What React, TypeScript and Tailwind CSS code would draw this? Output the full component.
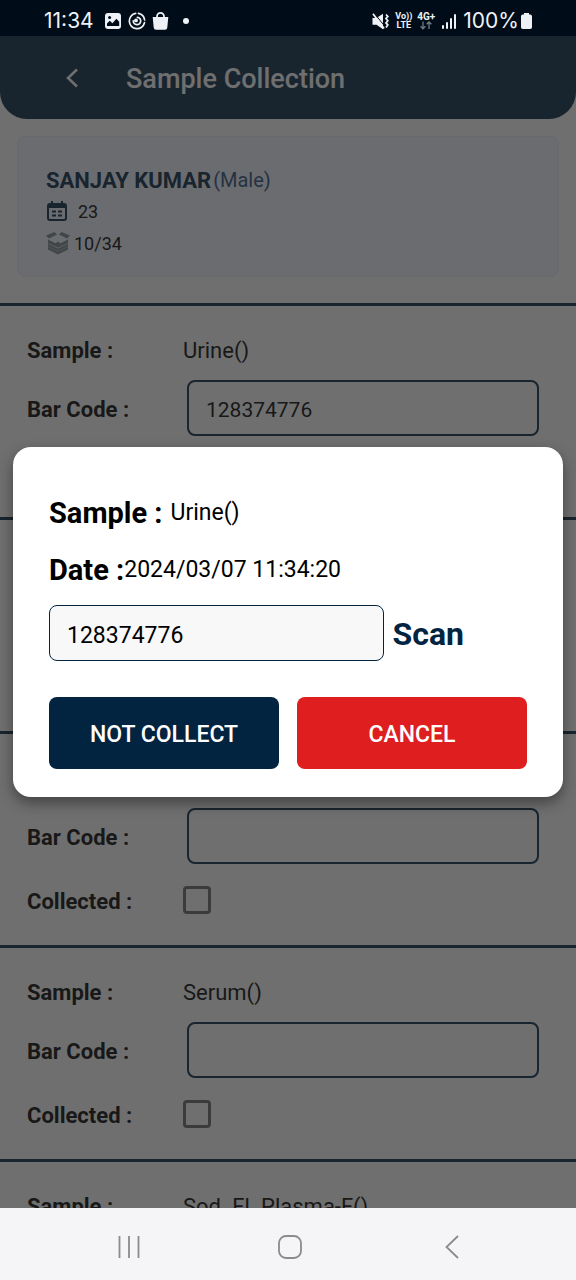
import { clsx } from "clsx";

interface Sample {
  id: number;
  name: string;
  barcode: string;
}

const samples: Sample[] = [
  { id: 1, name: "Urine()", barcode: "128374776" },
  { id: 2, name: "", barcode: "" },
  { id: 3, name: "", barcode: "" },
  { id: 4, name: "Serum()", barcode: "" },
  { id: 5, name: "Sod. Fl. Plasma-F()", barcode: "" },
];

function StatusBar() {
  return (
    <div className="flex h-9 shrink-0 items-center justify-between bg-[#000c17] pt-1.5 pr-11 pl-11 text-[#eef2f6]">
      <div className="flex items-center">
        <span className="font-['Inter',sans-serif] text-[21px] leading-6">11:34</span>
        {/* gallery */}
        <svg className="ml-2.5 h-[18px] w-[18px]" viewBox="0 0 18 18">
          <rect x="1" y="1" width="16" height="16" rx="3" fill="currentColor" />
          <circle cx="5.6" cy="5.6" r="1.5" fill="#000c17" />
          <path d="M3 14v-2.6l2.8-2.6 2.6 2.4 4-4.4 2.8 3V14z" fill="#000c17" />
        </svg>
        {/* disc */}
        <svg className="ml-1.5 h-[18px] w-[18px]" viewBox="0 0 18 18" fill="none" stroke="currentColor" strokeWidth="1.7" strokeLinecap="round">
          <path d="M10.5 1.4A7.7 7.7 0 0 1 16.6 8M16.5 10.7A7.7 7.7 0 1 1 7.6 1.4" />
          <path d="M9.400 5.300A3.700 3.700 0 1 1 5.300 8.800" />
          <circle cx="8" cy="8.400" r="1.1" fill="currentColor" />
        </svg>
        {/* shopping bag */}
        <svg className="ml-1.5 h-[18px] w-[17px]" viewBox="0 0 17 18">
          <path d="M5 6V4.4a3.5 3.5 0 0 1 7 0V6" fill="none" stroke="currentColor" strokeWidth="1.8" />
          <path d="M.7 5h15.6l-1 10.6a2.4 2.4 0 0 1-2.4 2.2H4.1a2.4 2.4 0 0 1-2.4-2.2z" fill="currentColor" />
        </svg>
        <span className="ml-3.5 h-1.5 w-1.5 rounded-full bg-current" />
      </div>
      <div className="flex items-center">
        {/* muted, vibrating */}
        <svg className="h-[17px] w-[17px]" viewBox="0 0 17 17">
          <path d="M.5 5h4L11 .8v15.400L4.500 11.800h-4z" fill="currentColor" />
          <path d="M2.200 .2L13 13.500" stroke="#000c17" strokeWidth="1" />
          <path d="M1 .8L12 15.5" stroke="currentColor" strokeWidth="1.8" />
          <path d="M14 1.5l1.800 2-1.800 2 1.800 2.200-1.800 2.200 1.800 2-1.800 2.600" fill="none" stroke="currentColor" strokeWidth="1.800" />
        </svg>
        <span className="ml-1.5 w-[17px] text-center text-[9px] leading-[9px] font-bold whitespace-nowrap">
          Vo))
          <br />
          LTE
        </span>
        <span className="ml-1 flex w-5 flex-col items-center text-[10px] leading-[9px] font-bold">
          4G+
          <svg className="h-[9px] w-3" viewBox="0 0 12 9" fill="none" stroke="#6f7a84" strokeWidth="1.3">
            <path d="M3 .5v7M.6 5.3L3 7.8l2.4-2.5M9 8V1M6.6 3.3L9 .8l2.4 2.5" />
          </svg>
        </span>
        <svg className="ml-1.5 h-4 w-[15px]" viewBox="0 0 15 16" fill="currentColor">
          <rect x="0" y="12" width="2" height="4" rx="1" />
          <rect x="4" y="9" width="2" height="7" rx="1" />
          <rect x="8" y="5" width="2" height="11" rx="1" />
          <rect x="12" y="1" width="2" height="15" rx="1" />
        </svg>
        <span className="ml-1.5 font-['Inter',sans-serif] text-[21px] leading-6">100%</span>
        <svg className="ml-0.5 h-4 w-[11px]" viewBox="0 0 11 16" fill="currentColor">
          <path d="M3 0h5v1.6h1.2A1.8 1.8 0 0 1 11 3.4v10.8a1.8 1.8 0 0 1-1.8 1.8H1.8A1.8 1.8 0 0 1 0 14.2V3.4a1.8 1.8 0 0 1 1.8-1.8H3z" />
        </svg>
      </div>
    </div>
  );
}

function PatientCard() {
  return (
    <section className="mx-[17px] mt-[17px] mb-[26px] h-[141px] rounded-lg border border-[#ebecf8] bg-[#f4f5ff] px-7 pt-7">
      <h2 className="flex h-[30px] items-center gap-0.5 text-[22px] text-[#022441]">
        <span className="font-bold">SANJAY KUMAR</span>
        <span className="text-[20px] text-[#1f4f7d]">(Male)</span>
      </h2>
      <p className="flex h-8 items-center gap-2.5 text-[18px]">
        <svg className="h-[22px] w-[22px] text-[#022441]" viewBox="0 0 22 22" fill="none" stroke="currentColor">
          <rect x="2" y="4" width="18" height="16" rx="2" strokeWidth="2" />
          <path d="M2 6h18" strokeWidth="4" />
          <path d="M6 1v4M16 1v4" strokeWidth="2" />
          <path d="M6 11.5h4M12 11.5h4M6 15.500h4M12 15.500h4" strokeWidth="1.8" />
        </svg>
        23
      </p>
      <p className="flex h-8 items-center gap-1 text-[18px]">
        <svg className="h-6 w-6 text-[#7a878b]" viewBox="0 0 24 24" fill="currentColor">
          <path d="M0 4.600L8.500 1 11 3.600 3 7.600zM24 4.600L15.500 1 13 3.600 21 7.600z" />
          <path d="M2 8.600l7.500 3.600L12 10.400l2.500 1.800L22 8.600v3.600L12 16.800 2 12.200z" />
          <path d="M2 12.800l10 4.600 10-4.600v5.600L12 23.600 2 18.400z" />
          <path d="M2 15.600l10 4.600 10-4.600" fill="none" stroke="#b4bac2" strokeWidth=".8" />
        </svg>
        10/34
      </p>
    </section>
  );
}

function SampleRow({ sample }: { sample: Sample }) {
  const label = "w-[156px] shrink-0 pt-0.5 font-bold";
  return (
    <section className="flex flex-col gap-4 border-t-3 border-[#022441] px-[27px] pt-7 pb-[25px] text-[22px]">
      <div className="flex h-[30px] items-center">
        <span className={label}>Sample :</span>
        <span className="pt-0.5">{sample.name}</span>
      </div>
      <div className="flex items-center">
        <label htmlFor={`barcode-${sample.id}`} className={label}>
          Bar Code :
        </label>
        <input
          id={`barcode-${sample.id}`}
          type="text"
          defaultValue={sample.barcode}
          className="mr-2.5 ml-1 h-14 min-w-0 flex-1 rounded-lg border-2 border-[#022441] px-[17px] pt-1 text-[21px]"
        />
      </div>
      <div className="flex h-10 items-center">
        <label htmlFor={`collected-${sample.id}`} className={label}>
          Collected :
        </label>
        <input
          id={`collected-${sample.id}`}
          type="checkbox"
          className="h-7 w-7 appearance-none rounded-sm border-3 border-[#666]"
        />
      </div>
    </section>
  );
}

function ActionButton({ label, danger }: { label: string; danger?: boolean }) {
  return (
    <button
      type="button"
      className={clsx("h-18 flex-1 rounded-lg pt-1 text-[23px] font-medium text-white", danger ? "bg-[#df1e20]" : "bg-[#022441]")}
    >
      {label}
    </button>
  );
}

function ScanDialog() {
  return (
    <div className="absolute inset-0 flex items-center justify-center bg-[#242424]/66 px-[13px]">
      <div
        role="dialog"
        aria-modal="true"
        className="w-full rounded-[18px] bg-white px-9 pt-9 pb-7 text-[23px] shadow-[0_6px_14px_rgba(0,0,0,0.4)]"
      >
        <p className="flex h-[57px] items-center gap-2 pt-1">
          <span className="text-[29px] font-bold">Sample :</span>
          <span>Urine()</span>
        </p>
        <p className="flex h-[57px] items-center pt-1">
          <span className="text-[29px] font-bold">Date :</span>
          <span>2024/03/07 11:34:20</span>
        </p>
        <div className="mt-2 flex items-center gap-[9px]">
          <input
            type="text"
            aria-label="Bar Code"
            defaultValue="128374776"
            className="h-14 w-[70%] rounded-lg border border-[#022441] bg-[#f8f8f9] px-[17px] pt-1"
          />
          <button type="button" className="pt-0.5 text-[32px] font-bold text-[#022441]">
            Scan
          </button>
        </div>
        <div className="mt-9 flex gap-[18px]">
          <ActionButton label="NOT COLLECT" />
          <ActionButton label="CANCEL" danger />
        </div>
      </div>
    </div>
  );
}

function NavBar() {
  const item = "flex h-full w-[28%] items-center justify-center";
  return (
    <nav className="flex h-18 shrink-0 justify-center bg-[#f5f5f8] pt-1.5 pl-1 text-[#8b8b8d]">
      <button type="button" aria-label="Recent apps" className={item}>
        <svg className="h-6 w-6" viewBox="0 0 24 24" stroke="currentColor" strokeWidth="1.8">
          <path d="M1.5 1v22M11 1v22M20.500 1v22" />
        </svg>
      </button>
      <button type="button" aria-label="Home" className={item}>
        <svg className="h-6 w-6" viewBox="0 0 24 24" fill="none" stroke="currentColor" strokeWidth="1.8">
          <rect x="1" y="1" width="22" height="22" rx="7" />
        </svg>
      </button>
      <button type="button" aria-label="Back" className={item}>
        <svg className="h-6 w-6" viewBox="0 0 24 24" fill="none" stroke="currentColor" strokeWidth="1.8">
          <path d="M20 1L8.5 12 20 23" />
        </svg>
      </button>
    </nav>
  );
}

export default function App() {
  return (
    <div className="flex h-screen flex-col bg-white font-['Roboto',sans-serif] text-black">
      <StatusBar />
      <main className="relative flex-1 overflow-hidden">
        <header className="flex h-[83px] items-center rounded-b-[27px] bg-[#022441] pl-15 text-white">
          <button type="button" aria-label="Back" className="flex h-6 w-6 items-center justify-center">
            <svg className="h-5 w-5" viewBox="0 0 20 20" fill="none" stroke="currentColor" strokeWidth="2.6">
              <path d="M15 1.5L6 10l9 8.5" />
            </svg>
          </button>
          <h1 className="ml-[42px] pt-1 text-[27px] font-medium">Sample Collection</h1>
        </header>
        <PatientCard />
        {samples.map((s) => (
          <SampleRow key={s.id} sample={s} />
        ))}
        <ScanDialog />
      </main>
      <NavBar />
    </div>
  );
}
